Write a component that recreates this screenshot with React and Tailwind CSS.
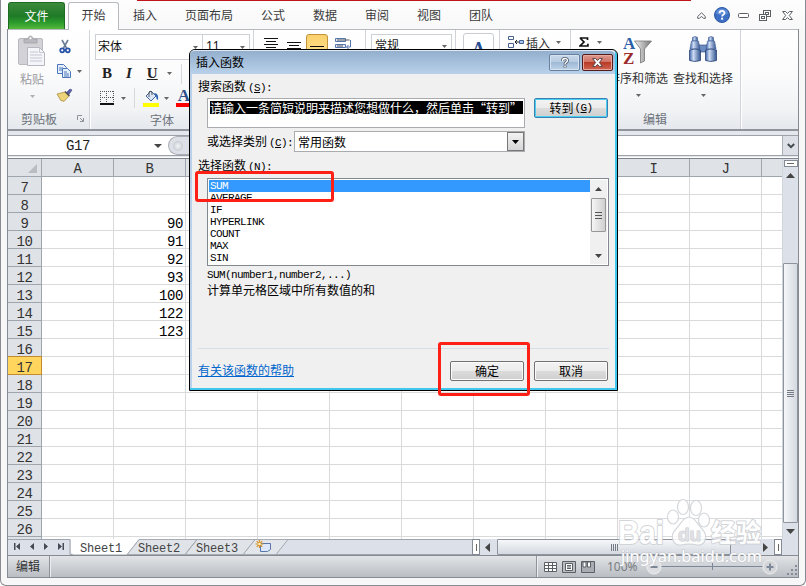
import React from "react";

const SANS = "font-['Noto_Sans_CJK_SC',sans-serif]";
const MONO = "font-['Liberation_Mono','Noto_Sans_CJK_SC',monospace]";

const tabs = ["插入", "页面布局", "公式", "数据", "审阅", "视图", "团队"];
const columns = ["A", "B", "C", "D", "E", "F", "G", "H", "I", "J", ""];
const rows = Array.from({ length: 20 }, (_, i) => i + 7);
const values = { 9: "90", 10: "91", 11: "92", 12: "93", 13: "100", 14: "122", 15: "123" };
const functions = ["SUM", "AVERAGE", "IF", "HYPERLINK", "COUNT", "MAX", "SIN"];

function Caret({ className = "" }) {
  return (
    <svg className={"shrink-0 " + className} width="5" height="3" viewBox="0 0 5 3">
      <path d="M0 0h5L2.5 3z" fill="currentColor" />
    </svg>
  );
}

/* Latin text in the 6px half-width cell of a 12px dialog face */
function Half({ children }) {
  return <span className={`${MONO} text-[11px] tracking-[-0.6px]`}>{children}</span>;
}

function Group({ className = "", children }) {
  return (
    <div className={"h-full shrink-0 border-r border-[#d0d4da] shadow-[1px_0_0_#fff] " + className}>{children}</div>
  );
}

function TitleTabs() {
  return (
    <div className="flex h-[29px] shrink-0 pl-[7px] text-[12px] text-[#3b3b3b]">
      <div className="mt-[2px] flex h-[27px] w-[57px] items-center justify-center rounded-t-[3px] border border-b-0 border-[#1f6b22] bg-[linear-gradient(#3c8a3c,#1f7a26_50%,#2b9a2c_75%,#57b83c)] text-white">
        文件
      </div>
      <div className="relative z-10 ml-[3px] mt-[2px] flex h-[28px] w-[51px] items-center justify-center rounded-t-[3px] border border-b-0 border-[#b6babf] bg-white pb-[3px]">
        开始
      </div>
      {tabs.map((t) => (
        <div key={t} className="flex h-[29px] items-center px-[14px] pt-[1px]">{t}</div>
      ))}
      <div className="ml-auto flex items-center gap-[12px] pr-[12px] pt-[1px]">
        <svg width="9" height="7" viewBox="0 0 9 7" fill="#fff" stroke="#5a5f66">
          <path d="M.7 4.5L4.5.8l3.8 3.7v1.8H6.5L4.5 4.300l-2 2H.7z" />
        </svg>
        <svg className="-ml-[4px]" width="16" height="16" viewBox="0 0 16 16">
          <circle cx="8" cy="8" r="7.500" fill="#3d70c4" stroke="#2e59a3" />
          <path d="M2 6.500a6 5 0 0 1 12 0q-6 3-12 0z" fill="#6d9ae0" opacity=".7" />
          <path d="M5.600 6.200c0-3 4.900-3 4.900-.2 0 1.800-2.400 1.700-2.400 3.400" fill="none" stroke="#fff" strokeWidth="1.800" />
          <rect x="7.100" y="10.700" width="2" height="2" fill="#fff" />
        </svg>
        <svg className="-ml-[4px]" width="11" height="5" viewBox="0 0 11 5">
          <rect x=".5" y=".5" width="10" height="4" rx="1" fill="#fff" stroke="#5a5f66" />
        </svg>
        <svg className="-ml-[2px]" width="12" height="11" viewBox="0 0 12 11" fill="#fff" stroke="#5a5f66">
          <rect x="4.500" y=".5" width="7" height="6" />
          <rect x="6.500" y="2.500" width="3" height="2" />
          <rect x=".5" y="4.500" width="7" height="6" />
          <rect x="2.500" y="6.500" width="3" height="2" />
        </svg>
        <svg className="-ml-[1px]" width="11" height="9" viewBox="0 0 11 9">
          <path d="M.6.5h3l1.900 2 1.900-2h3L7.300 4.500l3.100 4h-3l-1.900-2-1.900 2h-3l3.100-4z" fill="#fff" stroke="#5a5f66" />
        </svg>
      </div>
    </div>
  );
}

function ClipboardGroup() {
  return (
    <Group className="flex w-[82px] flex-col">
      <div className="flex h-[80px]">
        <div className="flex w-[48px] flex-col items-center pt-[5px] text-[12px] text-[#9b9b9f]">
          <svg width="28" height="32" viewBox="0 0 28 32">
            <rect x=".5" y="3.500" width="24" height="26" rx="1.500" fill="#d3d2d6" stroke="#bbb9bf" />
            <path d="M6 8V4h4c0-4 5-4 5 0h4v4z" fill="#b9b8be" stroke="#9fa0a5" strokeWidth=".7" />
            <circle cx="12.500" cy="3.200" r="1" fill="#fff" />
            <path d="M9.500 12.500h12l5 5v13h-17z" fill="#f4f5f9" stroke="#b5b6be" />
            <path d="M21.500 12.500v5h5M12 17h8M12 20h12M12 23h12M12 26h12" fill="none" stroke="#c5c7d2" />
          </svg>
          <span className="mt-[3px] leading-[18px]">粘贴</span>
          <Caret className="mt-[7px] text-[#b0b0b4]" />
        </div>
        <div className="flex flex-col gap-[10px] pt-[9px] text-[#666]">
          <svg className="ml-[3px]" width="12" height="15" viewBox="0 0 12 15" fill="none">
            <path d="M3 1l4.500 8M9 1L4.500 9" stroke="#6b7c98" strokeWidth="1.600" />
            <circle cx="3.200" cy="11.300" r="2" stroke="#2754a8" strokeWidth="1.700" />
            <circle cx="8.800" cy="11.300" r="2" stroke="#2754a8" strokeWidth="1.700" />
          </svg>
          <div className="flex items-center gap-[5px]">
            <svg width="16" height="14" viewBox="0 0 16 14" fill="#e6effc" stroke="#4d76b8">
              <path d="M1.500.5h6l3 3v6h-9zM3 4h4M3 6h4" />
              <path d="M6.500 4.500h5l3 3v6h-8zM8 8h3M8 10h5M8 12h5" />
            </svg>
            <Caret />
          </div>
          <svg width="17" height="14" viewBox="0 0 17 14">
            <path d="M10 5l4-4 2 1-3.500 5z" fill="#5c5fa8" stroke="#3d4280" strokeWidth=".6" />
            <path d="M1 6l8-2 4 4-5 5.500-2-1-1 .3z" fill="#ecd377" stroke="#a38134" strokeWidth=".7" />
            <path d="M9 3.500l4.500 4.500" stroke="#4c4c53" strokeWidth="1.500" />
          </svg>
        </div>
      </div>
      <div className="flex h-[21px] items-center justify-between pl-[13px] pr-[5px] text-[12px] text-[#6c727b]">
        剪贴板
        <svg width="7" height="7" viewBox="0 0 7 7" fill="none" stroke="#8d929a">
          <path d="M.5 5V.5H5M3 3l3 3M6.500 3v3.500H3" />
        </svg>
      </div>
    </Group>
  );
}

function FontGroup() {
  return (
    <Group className="flex w-[164px] flex-col">
      <div className="ml-[5px] mt-[4px] flex h-[26px] w-[155px] shrink-0 border border-[#cdd0d5] bg-white text-[12px] text-[#111]">
        <div className="flex w-[107px] items-center justify-between border-r border-[#cdd0d5] pb-[3px] pl-[2px] pr-[4px]">
          宋体 <Caret className="mt-[3px] text-[#666]" />
        </div>
        <div className="flex flex-1 items-center justify-between pb-[3px] pl-[3px] pr-[4px] font-['Noto_Sans']">
          11 <Caret className="mt-[3px] text-[#666]" />
        </div>
      </div>
      <div className="ml-[12px] mt-[5px] flex h-[17px] items-center font-['Liberation_Serif'] text-[15px] text-[#222]">
        <b>B</b>
        <i className="ml-[14px] font-bold">I</i>
        <b className="ml-[15px] underline">U</b>
        <Caret className="ml-[9px] text-[#666]" />
        <div className="ml-[9px] h-[20px] w-px bg-[#d5d8dc]" />
      </div>
      <div className="ml-[10px] mt-[7px] flex h-[18px] items-center text-[#666]">
        <svg width="14" height="14" viewBox="0 0 14 14" fill="none" stroke="#555">
          <path d="M0 .5h14M.5 0v12M13.500 0v12M6.500 0v12M0 6.500h14" strokeDasharray="1 1" shapeRendering="crispEdges" />
          <path d="M0 13h14" stroke="#111" strokeWidth="2" />
        </svg>
        <Caret className="ml-[7px]" />
        <div className="ml-[8px] h-[20px] w-px bg-[#d5d8dc]" />
        <svg className="ml-[8px]" width="17" height="18" viewBox="0 0 17 18">
          <path d="M3 7l5-5 5 5-5 5z" fill="#d8e6f8" stroke="#47699c" />
          <path d="M6 8V3.500q.5-3 3 0V6" fill="none" stroke="#555" />
          <path d="M11 4q5 0 4 7-2-1-2-4z" fill="#2a62b4" />
          <rect y="14" width="16" height="4" fill="#ff0" />
        </svg>
        <Caret className="ml-[4px]" />
        <div className="ml-[7px] flex w-[16px] flex-col items-center border-b-4 border-[#f00] font-['Liberation_Serif'] text-[17px] font-bold leading-[14px] text-[#2f4f8b]">A</div>
      </div>
      <div className="mt-[4px] flex h-[20px] items-center pl-[60px] text-[12px] text-[#6c727b]">字体</div>
    </Group>
  );
}

function EditingButton({ label, children }) {
  return (
    <div className="flex w-[60px] flex-col items-center text-[12px] text-[#333]">
      {children}
      <span className="mt-[2px] whitespace-nowrap leading-[18px]">{label}</span>
      <Caret className="mt-[7px] text-[#666]" />
    </div>
  );
}

function Barrel({ x }) {
  return (
    <g transform={`translate(${x} 0)`}>
      <path d="M3.500 2.500q2.500-2 5 0V6h-5z" fill="url(#lens)" stroke="#49659c" strokeWidth=".7" />
      <path d="M2.500 6h7l1.500 8H1z" fill="url(#lens)" stroke="#49659c" strokeWidth=".7" />
      <path d="M.5 15q5.500-2 11 0v10.500q-5.500 2-11 0z" fill="url(#lens)" stroke="#2b4679" strokeWidth=".8" />
    </g>
  );
}

function Ribbon() {
  return (
    <div className="flex h-[102px] shrink-0 border-y border-b-2 border-t-[#b6babf] border-b-[#8f949c] bg-[linear-gradient(#fff,#fbfbfc_45%,#f1f3f5_80%,#e5e8ec)]">
      <ClipboardGroup />
      <FontGroup />
      <Group className="flex w-[112px] items-start pt-[4px]">
        <svg className="ml-[10px] mt-[4px]" width="14" height="10" viewBox="0 0 14 10" stroke="#111"><path d="M0 .5h14M2 3.500h10M0 6.500h14M2 9.500h10" /></svg>
        <svg className="ml-[9px] mt-[8px]" width="14" height="10" viewBox="0 0 14 10" stroke="#111"><path d="M0 .5h14M2 3.500h10M0 6.500h14M2 9.500h10" /></svg>
        <div className="ml-[5px] h-[22px] w-[22px] rounded-[3px] border border-[#c0923c] bg-[linear-gradient(#fbd06c,#ffe38c)] pl-[3px] pt-[11px]">
          <svg width="14" height="7" viewBox="0 0 14 7" stroke="#111"><path d="M0 .5h14M2 3.500h10M0 6.500h14" /></svg>
        </div>
        <svg className="ml-[7px] mt-[4px]" width="16" height="14" viewBox="0 0 16 14" fill="none" stroke="#5576ac">
          <path d="M.5.5h10v3H.5zM.5 6.500h10v3H.5z" fill="#e7eefb" /><path d="M2 2h12.500M2 8h6" stroke="#555" /><path d="M15.500 2v7h-4m2-2l-2 2 2 2" />
        </svg>
      </Group>
      <Group className="w-[90px] pt-[4px]">
        <div className="ml-[5px] flex h-[26px] w-[81px] items-center justify-between border border-[#cdd0d5] bg-white pb-[4px] pl-[3px] pr-[4px] text-[12px] text-[#222]">
          常规 <Caret className="mt-[3px] text-[#666]" />
        </div>
      </Group>
      <Group className="w-[44px] pt-[3px]">
        <div className="ml-[7px] h-[40px] w-[31px] rounded-[3px] border border-[#c9ccd1] bg-white pt-[5px] text-center font-['Liberation_Serif'] text-[18px] font-bold leading-[20px] text-[#284d91]">A</div>
      </Group>
      <Group className="flex w-[71px] items-start pt-[4px] text-[12px] text-[#333]">
        <svg className="ml-[8px] mt-[2px]" width="16" height="15" viewBox="0 0 16 15" fill="#fff" stroke="#46618f">
          <path d="M.5.5h5v3h-5zM.5 7.500h5v4h-5z" /><path d="M11.500 4.500h4v3h-4z" fill="#a8c6f0" /><path d="M7 6h4M9 4L7 6l2 2" stroke="#222" fill="none" />
        </svg>
        <span className="ml-[2px] leading-[17px]">插入</span>
        <Caret className="ml-[6px] mt-[7px] text-[#666]" />
      </Group>
      <Group className="relative flex w-[170px] flex-col">
        <div className="flex h-[80px] pl-[7px]">
          <div className="flex w-[30px] items-start gap-[7px] pt-[7px]">
            <svg className="ml-[1px] shrink-0" width="11" height="10" viewBox="0 0 11 10"><path d="M.8 1h7.700v2M1 1l4 4-4 4h7.900V6.800" fill="none" stroke="#111" strokeWidth="1.700" /></svg>
            <Caret className="mt-[4px] text-[#666]" />
          </div>
          <div className="flex gap-[5px] pt-[5px]">
            <EditingButton label="排序和筛选">
              <svg width="30" height="32" viewBox="0 0 30 32">
                <defs><linearGradient id="metal"><stop stopColor="#f1f1f1" /><stop offset="1" stopColor="#777" /></linearGradient></defs>
                <text x="0" y="14" fontFamily="Liberation Serif" fontSize="17" fontWeight="700" fill="#2b5fa8">A</text>
                <text x="0" y="29" fontFamily="Liberation Serif" fontSize="17" fontWeight="700" fill="#9c2a2a">Z</text>
                <path d="M11.500 6h17L21.500 14v12l-4 2V14z" fill="url(#metal)" stroke="#777" strokeWidth=".8" />
              </svg>
            </EditingButton>
            <EditingButton label="查找和选择">
              <svg width="28" height="32" viewBox="0 0 28 32">
                <defs><linearGradient id="lens"><stop stopColor="#3e63a8" /><stop offset=".35" stopColor="#cddcf4" /><stop offset="1" stopColor="#33558f" /></linearGradient></defs>
                <rect x="10" y="10" width="8" height="7" fill="#6d8cc1" stroke="#2b4679" strokeWidth=".6" />
                <Barrel x={0} /><Barrel x={16} />
              </svg>
            </EditingButton>
          </div>
        </div>
        <div className="flex h-[21px] items-center pl-[72px] text-[12px] text-[#6c727b]">编辑</div>
      </Group>
    </div>
  );
}

function FormulaBar() {
  return (
    <div className="flex h-[28px] shrink-0 flex-col border-b border-[#7f858e] bg-[#e4e7eb] pt-[4px]">
      <div className="flex h-[21px] border-y border-[#9da2aa] bg-white">
        <div className={`flex w-[160px] items-center pl-[58px] pr-[6px] pt-px text-[14px] tracking-[-0.4px] text-[#222] ${MONO}`}>
          G17
          <svg className="ml-auto" width="8" height="4" viewBox="0 0 8 4"><path d="M0 0h8L4 4z" fill="#444" /></svg>
        </div>
        <div className="flex h-full w-[60px] items-center rounded-l-full border border-r-0 border-[#a9adb4] bg-[#dde1e7] pl-[4px]">
          <div className="size-[10px] rounded-full bg-[radial-gradient(#f4f5f7,#b7bcc4)]" />
        </div>
        <div className="flex-1" />
        <div className="flex w-[16px] items-center justify-center border-l border-[#a9adb4] bg-[#dde1e7]">
          <svg width="8" height="6" viewBox="0 0 8 6"><path d="M.8 1L4 4.200 7.200 1" fill="none" stroke="#444a52" strokeWidth="2" /></svg>
        </div>
      </div>
      <div className="mt-px h-px bg-white" />
    </div>
  );
}

function Grid() {
  return (
    <div className="flex h-[380px] shrink-0">
      <div className={`flex w-[774px] flex-col overflow-hidden text-[14px] tracking-[-0.4px] text-[#333] ${MONO}`}>
        <div className="flex h-[18px] shrink-0 border-b border-[#9fa5ad] bg-[#dfe2e7]">
          <div className="flex w-[34px] shrink-0 items-end justify-end border-r border-[#9fa5ad] pb-[3px] pr-[4px]">
            <svg width="9" height="9" viewBox="0 0 9 9"><path d="M9 0v9H0z" fill="#b9bdc3" /></svg>
          </div>
          {columns.map((c, i) => (
            <div key={i} className="flex w-[72px] shrink-0 items-center justify-center border-r border-[#9fa5ad] pt-[4px]">{c}</div>
          ))}
        </div>
        {[...rows, 27].map((r) => (
          <div key={r} className="flex h-[18px] shrink-0 bg-white">
            <div className={"flex w-[34px] shrink-0 items-center justify-center border-b border-r pt-[5px] " + (r === 17 ? "border-[#c28a30] bg-[#ffd55e] shadow-[0_-1px_0_#c28a30]" : "border-[#9fa5ad] bg-[#dfe2e7]")}>
              {r < 27 ? r : ""}
            </div>
            {columns.map((c, i) => (
              <div key={i} className="flex w-[72px] shrink-0 items-center justify-end border-b border-r border-[#d9dadc] pr-[2px] pt-[5px] text-black">
                {c === "B" ? values[r] : ""}
              </div>
            ))}
          </div>
        ))}
      </div>
      <div className="flex w-[16px] flex-col items-center border-l border-[#d0d4db] bg-[#dce0e9]">
        <div className="mt-px flex h-[7px] w-[14px] items-center justify-center border border-[#858b95] bg-white"><div className="h-px w-[7px] bg-[#666]" /></div>
        <svg className="mt-[6px]" width="9" height="5" viewBox="0 0 9 5"><path d="M0 5h9L4.500 0z" fill="#444" /></svg>
        <div className="mt-[85px] flex h-[260px] w-[15px] shrink-0 flex-col items-center justify-center gap-[1px] rounded-[1px] border border-[#8e949e] bg-[linear-gradient(90deg,#f5f7f9,#d5d9e0)]">
          {[0, 1, 2, 3].map((i) => <div key={i} className="h-px w-[7px] bg-[#757b85]" />)}
        </div>
        <svg className="mt-[6px] shrink-0" width="9" height="5" viewBox="0 0 9 5"><path d="M0 0h9L4.500 5z" fill="#444" /></svg>
      </div>
    </div>
  );
}

function SheetBar() {
  return (
    <div className={`flex h-[16px] shrink-0 bg-[#dce0e9] text-[12px] tracking-[-0.2px] text-[#444] ${MONO}`}>
      <svg width="284" height="16" viewBox="0 0 284 16">
        <path d="M0 .5h62v15h222M131 .5h153" fill="none" stroke="#9fa5ad" />
        <path d="M235 15.500l12-15h33l-12 15z" fill="#e2e5ea" stroke="#a6abb3" />
        <path d="M119 15.500l12-15h58l-12 15zM177 15.500l12-15h58l-12 15z" fill="#e0e3e8" stroke="#a6abb3" />
        <path d="M63 0h68l-12 15.500H66q-3 0-3-3z" fill="#fff" />
        <path d="M131 .5l-12 15" stroke="#a6abb3" />
        <g fill="#444a54">
          <path d="M6 4h1.500v7H6zM12 4v7L8 7.500zM26 4v7l-4-3.500zM36 4v7l4-3.500zM50 4v7l4-3.500zM54.500 4H56v7h-1.500z" />
        </g>
        <text x="72" y="12.500" fill="#444">Sheet1</text>
        <text x="130" y="12.500" fill="#444">Sheet2</text>
        <text x="188" y="12.500" fill="#444">Sheet3</text>
        <path d="M252.500 4.500h10v6l-3 2h-7z" fill="#dce8fa" stroke="#5876aa" />
        <path d="M251.500 1v8M247.500 5h8M248.700 2.200l5.600 5.600M254.300 2.200l-5.600 5.600" stroke="#d79124" strokeWidth="1.200" />
        <circle cx="251.500" cy="5" r="1.300" fill="#fff3c0" />
      </svg>
      <div className="flex-1 border-y border-[#9fa5ad]" />
      <div className="mr-[5px] flex w-[8px] items-center justify-center border border-[#858b95] bg-white"><div className="h-[7px] w-px bg-[#666]" /></div>
      <svg className="mr-[7px] mt-[4px]" width="5" height="9" viewBox="0 0 5 9"><path d="M5 0v9L0 4.500z" fill="#444" /></svg>
      <div className="flex w-[234px] items-center justify-center gap-[1px] rounded-[1px] border border-[#8e949e] bg-[linear-gradient(#f5f7f9,#d5d9e0)]">
        {[0, 1, 2, 3].map((i) => <div key={i} className="h-[7px] w-px bg-[#757b85]" />)}
      </div>
      <svg className="ml-[32px] mr-[6px] mt-[4px]" width="5" height="9" viewBox="0 0 5 9"><path d="M0 0v9l5-4.500z" fill="#444" /></svg>
      <div className="mr-[16px] flex w-[8px] items-center justify-center border border-[#858b95] bg-white"><div className="h-[7px] w-px bg-[#666]" /></div>
    </div>
  );
}

function StatusBar() {
  return (
    <div className="flex h-[23px] shrink-0 items-center border-y border-t-[#858a93] border-b-[#858a93] bg-[linear-gradient(#e2e4e7,#cfd2d6_45%,#babec4)] text-[12px] text-[#333]">
      <div className="flex h-full w-[42px] items-center border-r border-[#8f949c] pb-px pl-[8px] shadow-[1px_0_0_#eee]">编辑</div>
      <div className="ml-[486px] h-full w-px bg-[#8f949c] shadow-[1px_0_0_#eee]" />
      <svg className="ml-[7px]" width="52" height="12" viewBox="0 0 52 12" fill="none" stroke="#5b5f66">
        <path d="M.5 1.500h12v9H.5zM.5 4.500h12M.5 7.500h12M4.500 1.500v9M8.500 1.500v9" fill="#fff" />
        <path d="M18.500.5h13v11h-13z" fill="#b9bcc1" /><path d="M21.500 2.500h7v7h-7zM23 4.500h4M23 6h4M23 7.500h4" fill="#fff" />
        <path d="M37.500.5h13v11h-13z" fill="#a9adb3" /><path d="M39 1h3v5h-3zM43.500 1h3v5h-3z" fill="#fff" />
      </svg>
      <span className="ml-[11px] font-['Noto_Sans'] text-[#777b80]">100%</span>
      <svg className="ml-[8px]" width="134" height="16" viewBox="0 0 134 16" stroke="#7c8797">
        <path d="M15 7.500h102M66.500 4v7" />
        <circle cx="8" cy="8" r="7" fill="#dcdee1" stroke="#eee" /><path d="M4.500 8h7" strokeWidth="2" />
        <circle cx="124" cy="8" r="7" fill="#d4d6da" stroke="#eee" /><path d="M120.500 8h7M124 4.500v7" strokeWidth="2" />
      </svg>
      <svg className="ml-auto mt-auto mb-[1px]" width="11" height="11" viewBox="0 0 11 11" fill="#858b94">
        <path d="M8 0h2v2H8zM4 4h2v2H4zM8 4h2v2H8zM0 8h2v2H0zM4 8h2v2H4zM8 8h2v2H8z" />
      </svg>
    </div>
  );
}

function DialogButton({ focused, children }) {
  return (
    <div className={"flex h-[20px] w-[74px] items-center justify-center rounded-[2px] border bg-[linear-gradient(#f3f3f3,#ebebeb_50%,#dcdcdc_50%,#cfcfcf)] text-black " + (focused ? "border-[#3c7fb1] shadow-[inset_0_0_0_1px_#48d0f4]" : "border-[#707070] shadow-[inset_0_0_0_1px_#fbfbfb]")}>
      {children}
    </div>
  );
}

function InsertFunctionDialog() {
  return (
    <div className="absolute left-[189px] top-[49px] z-20 flex h-[342px] w-[429px] flex-col rounded-t-[6px] border border-b-[1px] border-black bg-[#f0f0f0] text-[12px] text-black shadow-[inset_-2px_-2px_0_#3fc7ee,inset_2px_0_0_#b9d1ea]">
      <div className="mr-[2px] flex h-[24px] shrink-0 items-start rounded-t-[5px] border-t border-[#dce8f4] bg-[linear-gradient(#93afcd,#b9d1ea)] pl-[6px] pr-[2px]">
        <span className="leading-[22px]">插入函数</span>
        <div className="ml-auto mt-[3px] flex h-[17px] w-[31px] items-center justify-center rounded-[2px] border border-[#65819f] bg-[linear-gradient(#c9d9ea,#b5cae0_50%,#9fb9d5_50%,#bfd3e8)] shadow-[inset_0_0_0_1px_#d7e4f0]">
          <svg width="8" height="11" viewBox="0 0 8 11"><path d="M1.500 4c0-3.200 5-3.200 5-.5C6.500 5.500 4 5 4 7.500M4 8.500v2" fill="none" stroke="#4d5967" strokeWidth="3" /><path d="M1.500 4c0-3.200 5-3.200 5-.5C6.500 5.500 4 5 4 7.300M4 8.700v1.500" fill="none" stroke="#fff" strokeWidth="1.400" /></svg>
        </div>
        <div className="ml-[2px] mt-[3px] flex h-[17px] w-[31px] items-center justify-center rounded-[2px] border border-[#541c1c] bg-[linear-gradient(#dc998d,#cf6e5f_50%,#b83a26_50%,#cf6653)] shadow-[inset_0_0_0_1px_#e8a99d]">
          <svg width="11" height="9" viewBox="0 0 11 9"><path d="M.6.6h3l1.900 2 1.900-2h3L7.400 4.500l3 3.900h-3l-1.900-2-1.900 2h-3l3-3.900z" fill="#fff" stroke="#5a4145" /></svg>
        </div>
      </div>
      <div className="flex flex-col pl-[8px] pr-[9px]">
        <div className="mt-[3px] h-[18px] leading-[18px]">搜索函数<Half><span className="pl-[2px]">(<u>S</u>):</span></Half></div>
        <div className="mt-[3px] flex items-start justify-between pl-[9px]">
          <div className="h-[30px] w-[318px] border border-[#a9abae] bg-white p-[2px]">
            <div className="h-[13px] w-[313px] whitespace-nowrap bg-black leading-[13px] text-white">请输入一条简短说明来描述您想做什么，然后单击“转到”</div>
          </div>
          <DialogButton focused>转到<Half><span className="pl-[1px]">(<u>G</u>)</span></Half></DialogButton>
        </div>
        <div className="mt-[3px] flex h-[21px] items-center pl-[9px]">
          <span className="w-[87px] whitespace-nowrap">或选择类别<Half><span className="pl-[2px]">(<u>C</u>):</span></Half></span>
          <div className="flex h-[21px] w-[231px] items-center border border-[#a9abae] bg-white pl-[3px]">
            常用函数
            <div className="ml-auto flex h-[19px] w-[17px] items-center justify-center border border-[#777] bg-[linear-gradient(#f2f2f2,#d6d6d6)]">
              <svg width="7" height="4" viewBox="0 0 7 4"><path d="M0 0h7L3.500 4z" /></svg>
            </div>
          </div>
        </div>
        <div className="mt-[4px] h-[18px] leading-[18px]">选择函数<Half><span className="pl-[2px]">(<u>N</u>):</span></Half></div>
        <div className="ml-[9px] mt-[4px] flex h-[88px] w-[402px] justify-between border border-[#828790] bg-white p-[1px]">
          <ul className="w-[381px]">
            {functions.map((f) => (
              <li key={f} className={"flex h-[12px] items-center pl-[1px] pt-px leading-[11px] " + (f === "SUM" ? "bg-[#3399ff] text-white" : "")}><Half>{f}</Half></li>
            ))}
          </ul>
          <div className="flex w-[17px] flex-col items-center bg-[#f0f0f0] text-[#444]">
            <svg className="mt-[7px]" width="7" height="4" viewBox="0 0 7 4"><path d="M0 4h7L3.500 0z" fill="currentColor" /></svg>
            <div className="mt-[7px] flex h-[34px] w-[15px] flex-col items-center justify-center gap-[2px] rounded-[1px] border border-[#979797] bg-[linear-gradient(90deg,#f5f5f5,#cfcfcf)]">
              {[0, 1, 2].map((i) => <div key={i} className="h-px w-[7px] bg-[#555]" />)}
            </div>
            <svg className="mt-[22px]" width="7" height="4" viewBox="0 0 7 4"><path d="M0 0h7L3.500 4z" fill="currentColor" /></svg>
          </div>
        </div>
        <div className="ml-[9px] mt-px flex h-[16px] items-center leading-[16px]"><Half>SUM(number1,number2,...)</Half></div>
        <div className="ml-[9px] h-[15px] leading-[13px]">计算单元格区域中所有数值的和</div>
        <div className="mt-[50px] h-px w-[411px] bg-[#d5dfe5]" />
        <div className="mt-[12px] flex items-center">
          <span className="h-[18px] leading-[15px] text-[#0066cc] underline">有关该函数的帮助</span>
          <div className="ml-auto flex gap-[10px]">
            <DialogButton>确定</DialogButton>
            <DialogButton>取消</DialogButton>
          </div>
        </div>
      </div>
    </div>
  );
}

function Watermark() {
  return (
    <svg className="absolute left-[612px] top-[494px] z-10" width="160" height="80" viewBox="0 0 160 80">
      <g fill="#fff" stroke="#d0d2d6" strokeWidth="1.200" opacity=".85">
        <ellipse cx="61" cy="23" rx="5.500" ry="7" /><ellipse cx="71" cy="13" rx="5.500" ry="7.500" />
        <ellipse cx="84" cy="14" rx="5.500" ry="7.500" /><ellipse cx="92" cy="26" rx="5.500" ry="7" />
        <path d="M77 23c6 0 8 7 13 12 7 7 3 17-5 16-5-1-11-1-16 0-8 1-12-9-5-16 5-5 7-12 13-12z" />
      </g>
      <g fill="#fff" stroke="#cfd1d5" strokeWidth="2" strokeLinejoin="round" paintOrder="stroke" fontWeight="700" opacity=".9">
        <text x="6" y="50" fontFamily="Liberation Sans" fontSize="33" textLength="46" lengthAdjust="spacingAndGlyphs">Bai</text>
        <text x="66" y="47" fontFamily="Liberation Sans" fontSize="19" fill="#dcdee2" stroke="#c6c8cd" strokeWidth="1">du</text>
        <text x="99" y="48" fontFamily="Noto Sans CJK SC" fontSize="25">经验</text>
      </g>
      <text x="9" y="68" fontFamily="Noto Sans" fontSize="16" textLength="141" lengthAdjust="spacingAndGlyphs" fill="#fff" stroke="#c3c6cb" strokeWidth="1" paintOrder="stroke">jingyan.baidu.com</text>
    </svg>
  );
}

export default function App() {
  return (
    <div lang="zh-CN" className={`relative h-[586px] w-[806px] overflow-hidden bg-white ${SANS}`}>
      <div className="flex h-[586px] w-[806px] flex-col rounded-b-[6px] border border-t-0 border-[#8a8a90] bg-[#f7f7f8]">
        <div className="bg-[linear-gradient(#fdfdfd,#f8f8f9)]"><TitleTabs /></div>
        <div className="mx-[6px] flex w-[792px] flex-col border-x border-[#858a93]">
          <Ribbon />
          <FormulaBar />
          <Grid />
          <SheetBar />
          <StatusBar />
        </div>
      </div>
      <div className="absolute left-[137px] top-0 h-px w-[554px] bg-[#c4141b]" />
      <Watermark />
      <InsertFunctionDialog />
      <div className="absolute left-[195px] top-[171px] z-30 h-[31px] w-[139px] rounded-[3px] border-[3px] border-[#ff2015]" />
      <div className="absolute left-[438px] top-[342px] z-30 h-[54px] w-[92px] rounded-[3px] border-[3px] border-[#ff2015]" />
    </div>
  );
}
